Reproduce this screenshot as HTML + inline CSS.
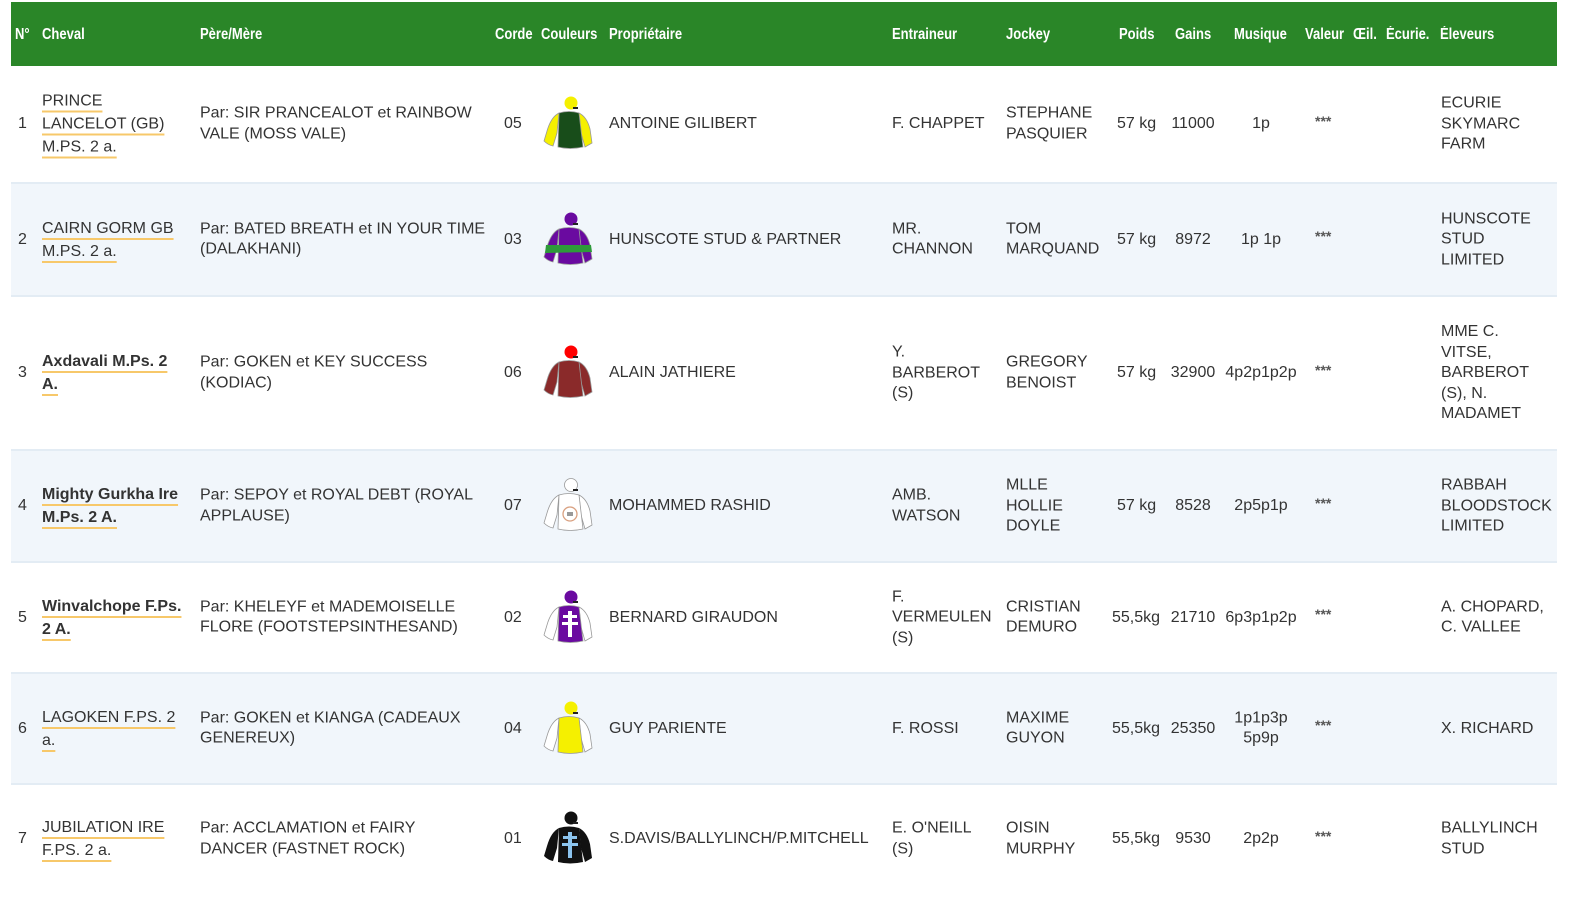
<!DOCTYPE html>
<html><head><meta charset="utf-8"><style>
body{margin:0;width:1594px;height:907px;background:#fff;font-family:"Liberation Sans",sans-serif;color:#333;font-size:16px;overflow:hidden;position:relative}
.hdr{position:absolute;left:11px;top:2px;width:1546px;height:64px;background:#2a8628}
.h{position:absolute;top:24px;color:#fff;font-family:"Liberation Sans",sans-serif;font-weight:bold;font-size:15.5px;white-space:nowrap;transform:scaleX(0.84);transform-origin:left center}
.row{position:absolute;left:11px;width:1546px;border-bottom:2px solid #e3ecf4}
.alt{background:#f1f6fb}
.c{position:absolute;top:50%;transform:translateY(-50%);white-space:nowrap;line-height:20.5px}
.ch{line-height:23px}
.ch span{text-decoration:underline;text-decoration-color:#f7c86a;text-decoration-thickness:2px;text-underline-offset:5px}
.b{font-weight:bold}
.ctr{text-align:center}
.st{font-size:14px;font-weight:bold;color:#555}
.j{position:absolute;left:532px;top:50%;transform:translateY(-50%)}
</style></head><body>
<div class="hdr">
<div class="h" style="left:4px">N°</div>
<div class="h" style="left:31px">Cheval</div>
<div class="h" style="left:189px">Père/Mère</div>
<div class="h" style="left:484px">Corde</div>
<div class="h" style="left:530px">Couleurs</div>
<div class="h" style="left:598px">Propriétaire</div>
<div class="h" style="left:881px">Entraineur</div>
<div class="h" style="left:995px">Jockey</div>
<div class="h" style="left:1108px">Poids</div>
<div class="h" style="left:1164px">Gains</div>
<div class="h" style="left:1223px">Musique</div>
<div class="h" style="left:1294px">Valeur</div>
<div class="h" style="left:1342px">Œil.</div>
<div class="h" style="left:1375px">Écurie.</div>
<div class="h" style="left:1429px">Éleveurs</div>
</div>

<svg width="0" height="0" style="position:absolute">
<defs>
<path id="bd" d="M16 18 Q26 15 36 18 L40 52 Q27 55 15 52 Z"/>
<path id="sl" d="M16 18 Q8 22 4 36 L1 46 Q5 50 10 51 L14 38 Z"/>
<path id="sr" d="M36 18 Q44 22 47 34 L49 48 L42 52 L38 38 Z"/>
</defs></svg>

<div class="row" style="top:66px;height:116px">
<div class="c" style="left:7px">1</div>
<div class="c ch" style="left:31px"><span>PRINCE</span><br><span>LANCELOT (GB)</span><br><span>M.PS. 2 a.</span></div>
<div class="c" style="left:189px">Par: SIR PRANCEALOT et RAINBOW<br>VALE (MOSS VALE)</div>
<div class="c" style="left:493px">05</div>
<svg class="j" width="50" height="58" viewBox="0 0 50 58"><use href="#sl" fill="#f5f000" stroke="#999" stroke-width=".8"/><use href="#sr" fill="#f5f000" stroke="#999" stroke-width=".8"/><use href="#bd" fill="#184d1a" stroke="#999" stroke-width=".8"/><circle cx="28" cy="8" r="6.5" fill="#f5f000"/><path d="M30 13 L35 13" stroke="#222" stroke-width="2"/></svg>
<div class="c" style="left:598px">ANTOINE GILIBERT</div>
<div class="c" style="left:881px">F. CHAPPET</div>
<div class="c" style="left:995px">STEPHANE<br>PASQUIER</div>
<div class="c" style="left:1106px">57 kg</div>
<div class="c ctr" style="left:1152px;width:60px">11000</div>
<div class="c ctr" style="left:1210px;width:80px">1p</div>
<div class="c st" style="left:1304px;top:47%">***</div>
<div class="c" style="left:1430px">ECURIE<br>SKYMARC<br>FARM</div>
</div>

<div class="row alt" style="top:184px;height:111px">
<div class="c" style="left:7px">2</div>
<div class="c ch" style="left:31px"><span>CAIRN GORM GB</span><br><span>M.PS. 2 a.</span></div>
<div class="c" style="left:189px">Par: BATED BREATH et IN YOUR TIME<br>(DALAKHANI)</div>
<div class="c" style="left:493px">03</div>
<svg class="j" width="50" height="58" viewBox="0 0 50 58"><use href="#sl" fill="#6a0aa0" stroke="#999" stroke-width=".8"/><use href="#sr" fill="#6a0aa0" stroke="#999" stroke-width=".8"/><use href="#bd" fill="#6a0aa0" stroke="#999" stroke-width=".8"/><path d="M3 34 L48 34 L49 41 L2 42 Z" fill="#2e9a3a"/><circle cx="28" cy="8" r="6.5" fill="#6a0aa0"/><path d="M30 13 L35 13" stroke="#222" stroke-width="2"/></svg>
<div class="c" style="left:598px">HUNSCOTE STUD &amp; PARTNER</div>
<div class="c" style="left:881px">MR.<br>CHANNON</div>
<div class="c" style="left:995px">TOM<br>MARQUAND</div>
<div class="c" style="left:1106px">57 kg</div>
<div class="c ctr" style="left:1152px;width:60px">8972</div>
<div class="c ctr" style="left:1210px;width:80px">1p 1p</div>
<div class="c st" style="left:1304px;top:47%">***</div>
<div class="c" style="left:1430px">HUNSCOTE<br>STUD<br>LIMITED</div>
</div>

<div class="row" style="top:297px;height:152px">
<div class="c" style="left:7px">3</div>
<div class="c ch b" style="left:31px"><span>Axdavali M.Ps. 2</span><br><span>A.</span></div>
<div class="c" style="left:189px">Par: GOKEN et KEY SUCCESS<br>(KODIAC)</div>
<div class="c" style="left:493px">06</div>
<svg class="j" width="50" height="58" viewBox="0 0 50 58"><use href="#sl" fill="#8a2a2a" stroke="#999" stroke-width=".8"/><use href="#sr" fill="#8a2a2a" stroke="#999" stroke-width=".8"/><use href="#bd" fill="#8a2a2a" stroke="#999" stroke-width=".8"/><circle cx="28" cy="8" r="6.5" fill="#f00"/><path d="M30 13 L35 13" stroke="#222" stroke-width="2"/></svg>
<div class="c" style="left:598px">ALAIN JATHIERE</div>
<div class="c" style="left:881px">Y.<br>BARBEROT<br>(S)</div>
<div class="c" style="left:995px">GREGORY<br>BENOIST</div>
<div class="c" style="left:1106px">57 kg</div>
<div class="c ctr" style="left:1152px;width:60px">32900</div>
<div class="c ctr" style="left:1210px;width:80px">4p2p1p2p</div>
<div class="c st" style="left:1304px;top:48%">***</div>
<div class="c" style="left:1430px">MME C.<br>VITSE,<br>BARBEROT<br>(S), N.<br>MADAMET</div>
</div>

<div class="row alt" style="top:451px;height:110px">
<div class="c" style="left:7px">4</div>
<div class="c ch b" style="left:31px"><span>Mighty Gurkha Ire</span><br><span>M.Ps. 2 A.</span></div>
<div class="c" style="left:189px">Par: SEPOY et ROYAL DEBT (ROYAL<br>APPLAUSE)</div>
<div class="c" style="left:493px">07</div>
<svg class="j" width="50" height="58" viewBox="0 0 50 58"><use href="#sl" fill="#fff" stroke="#999" stroke-width=".8"/><use href="#sr" fill="#fff" stroke="#999" stroke-width=".8"/><use href="#bd" fill="#fff" stroke="#999" stroke-width=".8"/><circle cx="27" cy="37" r="7" fill="none" stroke="#d9a080" stroke-width="1.3"/><rect x="24" y="35" width="6" height="4" fill="#999"/><circle cx="28" cy="8" r="6.5" fill="#fff" stroke="#999" stroke-width=".8"/><path d="M30 13 L35 13" stroke="#222" stroke-width="2"/></svg>
<div class="c" style="left:598px">MOHAMMED RASHID</div>
<div class="c" style="left:881px">AMB.<br>WATSON</div>
<div class="c" style="left:995px">MLLE<br>HOLLIE<br>DOYLE</div>
<div class="c" style="left:1106px">57 kg</div>
<div class="c ctr" style="left:1152px;width:60px">8528</div>
<div class="c ctr" style="left:1210px;width:80px">2p5p1p</div>
<div class="c st" style="left:1304px;top:47%">***</div>
<div class="c" style="left:1430px">RABBAH<br>BLOODSTOCK<br>LIMITED</div>
</div>

<div class="row" style="top:563px;height:109px">
<div class="c" style="left:7px">5</div>
<div class="c ch b" style="left:31px"><span>Winvalchope F.Ps.</span><br><span>2 A.</span></div>
<div class="c" style="left:189px">Par: KHELEYF et MADEMOISELLE<br>FLORE (FOOTSTEPSINTHESAND)</div>
<div class="c" style="left:493px">02</div>
<svg class="j" width="50" height="58" viewBox="0 0 50 58"><use href="#sl" fill="#fff" stroke="#999" stroke-width=".8"/><use href="#sr" fill="#fff" stroke="#999" stroke-width=".8"/><use href="#bd" fill="#6a0aa0" stroke="#999" stroke-width=".8"/><path d="M25 22 h4 v4 h5 v3 h-5 v4 h6 v3 h-6 v12 h-4 v-12 h-6 v-3 h6 v-4 h-5 v-3 h5 Z" fill="#fff"/><circle cx="28" cy="8" r="6.5" fill="#6a0aa0"/><path d="M30 13 L35 13" stroke="#222" stroke-width="2"/></svg>
<div class="c" style="left:598px">BERNARD GIRAUDON</div>
<div class="c" style="left:881px">F.<br>VERMEULEN<br>(S)</div>
<div class="c" style="left:995px">CRISTIAN<br>DEMURO</div>
<div class="c" style="left:1101px">55,5kg</div>
<div class="c ctr" style="left:1152px;width:60px">21710</div>
<div class="c ctr" style="left:1210px;width:80px">6p3p1p2p</div>
<div class="c st" style="left:1304px;top:47%">***</div>
<div class="c" style="left:1430px">A. CHOPARD,<br>C. VALLEE</div>
</div>

<div class="row alt" style="top:674px;height:109px">
<div class="c" style="left:7px">6</div>
<div class="c ch" style="left:31px"><span>LAGOKEN F.PS. 2</span><br><span>a.</span></div>
<div class="c" style="left:189px">Par: GOKEN et KIANGA (CADEAUX<br>GENEREUX)</div>
<div class="c" style="left:493px">04</div>
<svg class="j" width="50" height="58" viewBox="0 0 50 58"><use href="#sl" fill="#fff" stroke="#999" stroke-width=".8"/><use href="#sr" fill="#fff" stroke="#999" stroke-width=".8"/><use href="#bd" fill="#f5f000" stroke="#999" stroke-width=".8"/><circle cx="28" cy="8" r="6.5" fill="#f5f000"/><path d="M30 13 L35 13" stroke="#222" stroke-width="2"/></svg>
<div class="c" style="left:598px">GUY PARIENTE</div>
<div class="c" style="left:881px">F. ROSSI</div>
<div class="c" style="left:995px">MAXIME<br>GUYON</div>
<div class="c" style="left:1101px">55,5kg</div>
<div class="c ctr" style="left:1152px;width:60px">25350</div>
<div class="c ctr" style="left:1210px;width:80px">1p1p3p<br>5p9p</div>
<div class="c st" style="left:1304px;top:47%">***</div>
<div class="c" style="left:1430px">X. RICHARD</div>
</div>

<div class="row" style="top:785px;height:108px;border-bottom:none">
<div class="c" style="left:7px">7</div>
<div class="c ch" style="left:31px"><span>JUBILATION IRE</span><br><span>F.PS. 2 a.</span></div>
<div class="c" style="left:189px">Par: ACCLAMATION et FAIRY<br>DANCER (FASTNET ROCK)</div>
<div class="c" style="left:493px">01</div>
<svg class="j" width="50" height="58" viewBox="0 0 50 58"><use href="#sl" fill="#111"/><use href="#sr" fill="#111"/><use href="#bd" fill="#111"/><path d="M25 22 h4 v4 h5 v3 h-5 v4 h6 v3 h-6 v12 h-4 v-12 h-6 v-3 h6 v-4 h-5 v-3 h5 Z" fill="#8cc4ee"/><circle cx="28" cy="8" r="6.5" fill="#111"/><path d="M30 13 L35 13" stroke="#222" stroke-width="2"/></svg>
<div class="c" style="left:598px">S.DAVIS/BALLYLINCH/P.MITCHELL</div>
<div class="c" style="left:881px">E. O'NEILL<br>(S)</div>
<div class="c" style="left:995px">OISIN<br>MURPHY</div>
<div class="c" style="left:1101px">55,5kg</div>
<div class="c ctr" style="left:1152px;width:60px">9530</div>
<div class="c ctr" style="left:1210px;width:80px">2p2p</div>
<div class="c st" style="left:1304px;top:47%">***</div>
<div class="c" style="left:1430px">BALLYLINCH<br>STUD</div>
</div>
</body></html>
